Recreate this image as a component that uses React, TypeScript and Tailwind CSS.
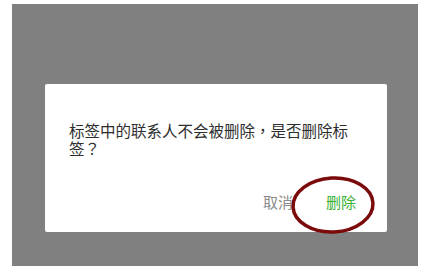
export default function App() {
  return (
    <div className="w-[444px] h-[270px] bg-white pt-[4px] pl-[12px]">
      <div className="w-[406px] h-[262px] bg-[#808080] pt-[80px] pl-[33px]">
        <div
          className="relative w-[342px] h-[148px] bg-white rounded-[2px] pt-[37px] pl-[24px] pr-[24px]"
          style={{ fontFamily: '"Noto Sans CJK SC", "Noto Sans", sans-serif' }}
        >
          <p
            className="w-[300px] text-[15.5px] leading-[18px] text-[#2e2e2e]"
            style={{ fontFamily: '"Noto Sans CJK TC", "Noto Sans CJK SC", sans-serif' }}
          >
            标签中的联系人不会被删除，是否删除标签？
          </p>
          <div className="absolute left-0 right-0 top-[109px] flex justify-end pr-[31px] text-[15px] leading-[18px]">
            <span className="text-[#8a8a8a]">取消</span>
            <span className="ml-[33px] text-[#3ab034]">删除</span>
          </div>
          <svg
            className="absolute left-[245px] top-[90px]"
            width="86"
            height="62"
            viewBox="0 0 86 62"
          >
            <ellipse
              cx="43"
              cy="31"
              rx="40"
              ry="27"
              fill="none"
              stroke="#7b0a0a"
              strokeWidth="3.5"
              transform="rotate(-3 43 31)"
            />
          </svg>
        </div>
      </div>
    </div>
  )
}
